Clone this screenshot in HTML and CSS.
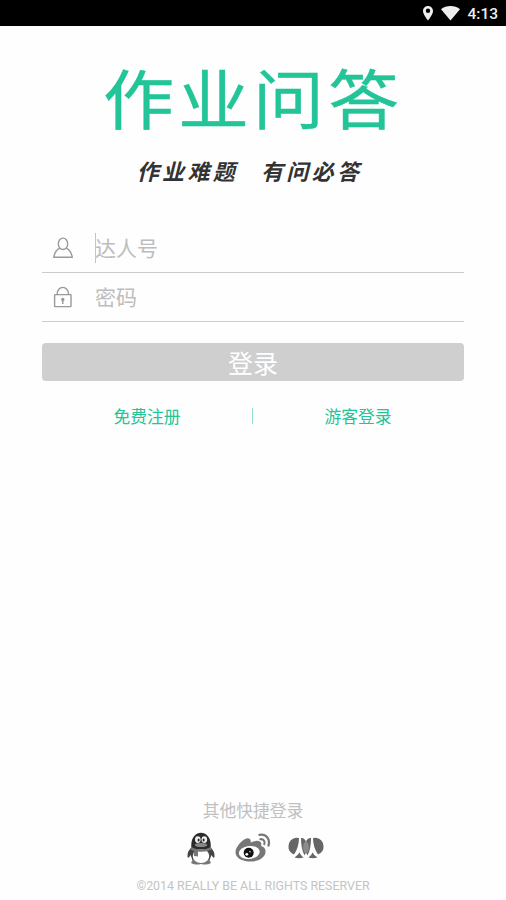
FILE: index.html
```html
<!DOCTYPE html>
<html lang="zh-CN">
<head>
<meta charset="utf-8">
<title>作业问答</title>
<link rel="stylesheet" href="styles.css">
</head>
<body>
<header class="status">
  <svg class="pin" width="10" height="15" viewBox="0 0 10 15"><path fill="#eee" fill-rule="evenodd" d="M5 0C2.2 0 0 2.2 0 5c0 3.6 5 9.5 5 9.5S10 8.600 10 5C10 2.200 7.800 0 5 0zM5 2.600a2.200 2.200 0 1 1 0 4.400a2.200 2.200 0 0 1 0-4.400z"/></svg>
  <svg class="wifi" width="19" height="15" viewBox="0 0 19 15"><path fill="#eee" d="M0 3.300C5-1 14-1 19 3.300L9.500 14.500z"/></svg>
  <span class="time">4:13</span>
</header>
<main class="page">
  <h1 class="logo">作业问答</h1>
  <p class="tagline"><span>作业难题</span><span>有问必答</span></p>
  <form class="form">
    <div class="field">
      <svg class="field-icon" width="20" height="22" viewBox="0 0 20 22" fill="none" stroke="#999" stroke-width="1.400"><ellipse cx="10" cy="6.800" rx="4.700" ry="5.700"/><path d="M6.700 11.200C3.500 13 1.500 15 .8 20.200H19.200C18.500 15 16.500 13 13.300 11.200"/></svg>
      <div class="hint"><i class="caret"></i>达人号</div>
    </div>
    <div class="field">
      <svg class="field-icon" width="20" height="22" viewBox="0 0 20 22" fill="none" stroke="#999" stroke-width="1.400"><rect x="1.600" y="8.600" width="16.400" height="12" rx=".6"/><path d="M4 8.600C4 -1 15.600 -1 15.600 8.600M9.800 14v4"/><circle cx="9.800" cy="13.500" r="1" fill="#999"/></svg>
      <div class="hint">密码</div>
    </div>
    <button class="login" type="button">登录</button>
  </form>
  <nav class="links"><a>免费注册</a><i class="divider"></i><a>游客登录</a></nav>
</main>
<footer class="footer">
  <p class="other">其他快捷登录</p>
  <div class="social">
    <svg width="28" height="33" viewBox="0 0 28 33">
      <path fill="#777" d="M6 27h16l2 4q-4 2.500-10 1q-6 1.500-10-1z"/>
      <path fill="#444" d="M5 15Q0 19 .5 25q1 2 3-2l2 5h17l2-5q2 4 3 2q.5-6-4.500-10z"/>
      <ellipse cx="14" cy="24" rx="8.300" ry="7" fill="#fff"/>
      <path fill="#2c2c2c" d="M4.300 15C3-4 25-4 23.700 15Q14 20 4.300 15z"/>
      <ellipse cx="10.800" cy="7.600" rx="2.800" ry="3.400" fill="#eee"/><ellipse cx="17.300" cy="7.600" rx="2.800" ry="3.400" fill="#eee"/>
      <ellipse cx="11.600" cy="8" rx="1" ry="1.500" fill="#222"/><ellipse cx="16.600" cy="8" rx="1" ry="1.500" fill="#222"/>
      <ellipse cx="14" cy="13" rx="6.300" ry="2" fill="#888"/>
      <path fill="#777" d="M4 15q10 5 20 0l.8 2.500Q18 20.500 11 19.500v5l-4-.5v-5l-3.500-1.500z"/>
    </svg>
    <svg class="weibo" width="36" height="30" viewBox="0 0 36 30">
      <path fill="#777" d="M14 5.500q2.500 1 1.500 4q7-3 10-.5q1.500 1.500.5 4q5 1.500 4.500 6C30 26 21 29 14 28.500C6 28 .5 24.500.5 19C.5 13 10 4 14 5.500z"/>
      <ellipse cx="14.300" cy="19.500" rx="10.500" ry="6.500" fill="#fff" transform="rotate(-7 14.300 19.500)"/>
      <circle cx="13.700" cy="19.800" r="5" fill="#111"/><circle cx="11.800" cy="21.300" r="1.400" fill="#fff"/><circle cx="15" cy="18.700" r=".7" fill="#fff"/>
      <g fill="none" stroke="#777" stroke-linecap="round"><path stroke-width="2.300" d="M24.500 1.800C31 .5 35.500 6 33.500 12.500"/><path stroke-width="2" d="M25.300 6.200c3-.5 5 2 4 5"/></g>
    </svg>
    <svg width="36" height="22" viewBox="0 0 36 22">
      <g fill="#666">
        <path d="M11 1Q11 10 6 17.500Q0 15 .5 9Q1 2 8 .8z"/>
        <path d="M25 1Q25 10 30 17.500Q36 15 35.500 9Q35 2 28 .8z"/>
        <path d="M13 1q3.500-.5 5 4v9l-1.500 4.500Q13 12 13 1z"/>
        <path d="M23 1q-3.500-.5-5 4v9l1.500 4.500Q23 12 23 1z"/>
        <path fill="#8b8b8b" d="M18 3.500q3 3 3 7t-3 7q-3-3-3-7t3-7z"/>
        <path d="M6.500 20.500q3.500-2.500 5-5q1.200 3 4 5q-4 1.600-9 0zM20.500 20.500q3-2 4-5q1.500 3 5 5q-5 1.600-9 0z"/>
      </g>
    </svg>
  </div>
  <p class="copyright">©2014 REALLY BE ALL RIGHTS RESERVER</p>
</footer>
</body>
</html>
```
FILE: styles.css
```css
* { box-sizing: border-box; }
body {
  margin: 0;
  height: 900px;
  overflow: hidden;
  display: flex;
  flex-direction: column;
  background: #fefefe;
  font-family: Roboto, "Noto Sans CJK SC", sans-serif;
}
p, h1 { margin: 0; }
svg { display: block; flex: none; }
.status {
  height: 26px;
  flex: none;
  display: flex;
  justify-content: flex-end;
  align-items: center;
  padding-right: 8px;
  background: #000;
  color: #eee;
}
.pin { margin-right: 8px; }
.wifi { margin-right: 7px; }
.time { font-size: 15.500px; font-weight: 500; line-height: 26px; padding-top: 1px; }
.page { flex: 1; padding: 0 42px; }
.logo {
  margin-top: 30px;
  height: 80px;
  line-height: 78px;
  font-family: "Noto Sans CJK SC", sans-serif;
  font-size: 71px;
  font-weight: 400;
  letter-spacing: 4px;
  text-align: center;
  white-space: nowrap;
  color: #22c498;
  -webkit-text-stroke: .4px #22c498;
  transform: scaleY(.92);
}
.tagline {
  margin-top: 19px;
  height: 30px;
  line-height: 30px;
  display: flex;
  justify-content: center;
  gap: 23px;
  padding-right: 7px;
  font-family: "Noto Sans CJK SC", sans-serif;
  font-size: 22px;
  font-weight: 700;
  font-style: italic;
  letter-spacing: 3.300px;
  color: #333;
}
.form { margin-top: 39px; }
.field {
  height: 49px;
  display: flex;
  align-items: center;
  border-bottom: 1px solid #ccc;
}
.field-icon { margin: 0 22px 0 11px; }
.hint { position: relative; font-size: 21px; line-height: 30px; padding-top: 2px; color: #bdbdbd; }
.caret { position: absolute; left: 0; top: 1px; width: 1px; height: 30px; background: #8adfc6; }
.login {
  display: block;
  width: 100%;
  height: 38px;
  margin-top: 21px;
  padding: 5px 0 0;
  border: 0;
  border-radius: 4px;
  background: #cfcfcf;
  color: #fff;
  font: 25px/33px Roboto, "Noto Sans CJK SC", sans-serif;
}
.links {
  display: flex;
  align-items: center;
  margin-top: 23px;
  height: 24px;
  padding-right: 1px;
  font-size: 16.800px;
  color: #22c498;
}
.links a { flex: 1; text-align: center; }
.divider { width: 1px; height: 16px; background: #91e1cb; }
.footer { height: 102px; text-align: center; }
.other { height: 26px; line-height: 26px; font-size: 16.800px; color: #c0c0c0; }
.social { height: 50px; display: flex; align-items: center; justify-content: center; gap: 17px; padding: 0 0 2px 5px; }
.weibo { margin-left: 3px; }
.copyright { height: 24px; line-height: 24px; font-size: 12.400px; color: #c4c4c4; }
```
